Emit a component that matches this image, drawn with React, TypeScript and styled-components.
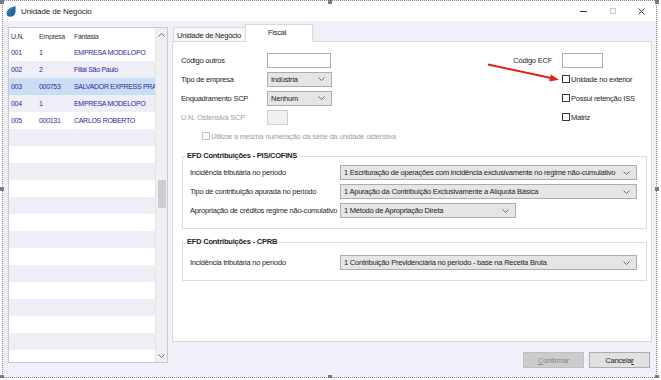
import styled, { createGlobalStyle } from 'styled-components'

const GlobalStyle = createGlobalStyle`
  html, body {
    margin: 0;
    padding: 0;
    background: #ffffff;
  }
  body {
    font-family: "Liberation Sans", Arial, sans-serif;
    font-size: 7.5px;
    letter-spacing: -0.22px;
    color: #1e1e1e;
  }
`

const Frame = styled.div`
  position: relative;
  box-sizing: border-box;
  width: 655px;
  height: 378px;
  margin-left: 2px;
  border: 1px dotted #8c8c8c;
  display: flex;
  flex-direction: column;
  background: #f0f0f8;
`

const Handle = styled.span<{ $x: string; $y: string }>`
  position: absolute;
  width: 4px;
  height: 4px;
  background: #7a7a7a;
  left: ${(p) => p.$x};
  top: ${(p) => p.$y};
`

const TitleBar = styled.div`
  height: 20px;
  flex: none;
  display: flex;
  align-items: center;
  background: #ffffff;
  padding-left: 3px;
  font-size: 8px;
  letter-spacing: -0.1px;
  color: #222;

  .title {
    margin-left: 5px;
  }
`

const WindowButtons = styled.div`
  margin-left: auto;
  display: flex;
  height: 100%;
`

const WinButton = styled.span`
  width: 29px;
  height: 100%;
  display: flex;
  align-items: center;
  justify-content: center;
`

const Main = styled.div`
  display: flex;
  gap: 4px;
  padding: 3px 0 0 5px;
`

const Grid = styled.div`
  box-sizing: border-box;
  width: 160px;
  height: 336px;
  margin-top: 3px;
  border: 1px solid #c9c9cf;
  background: #ffffff;
  display: flex;
  overflow: hidden;
`

const GridBody = styled.div`
  flex: 1;
  overflow: hidden;
  font-size: 7px;
  letter-spacing: -0.3px;
`

const HeaderRow = styled.div`
  display: flex;
  height: 16px;
  align-items: center;
  color: #333;
`

const Row = styled.div<{ $striped?: boolean; $selected?: boolean }>`
  display: flex;
  height: 17px;
  align-items: center;
  color: #2a2a9c;
  background: ${(p) => (p.$selected ? '#c9def5' : p.$striped ? '#eeeef7' : '#ffffff')};
`

const Cell = styled.span<{ $w?: number }>`
  padding-left: 2px;
  white-space: nowrap;
  overflow: hidden;
  box-sizing: border-box;
  ${(p) => (p.$w ? `width: ${p.$w}px; flex: none;` : 'flex: 1;')}
`

const ScrollBar = styled.div`
  width: 12px;
  flex: none;
  background: #f0f0f0;
  border-left: 1px solid #e4e4e4;
  display: flex;
  flex-direction: column;
  align-items: center;
  justify-content: space-between;
  padding: 5px 0 4px;
  box-sizing: border-box;
  position: relative;
`

const Thumb = styled.div`
  position: absolute;
  left: 2px;
  top: 152px;
  width: 8px;
  height: 28px;
  background: #cdcdcd;
`

const RightColumn = styled.div`
  width: 480px;
  display: flex;
  flex-direction: column;
`

const TabStrip = styled.div`
  display: flex;
  align-items: flex-end;
  height: 17px;
  padding-left: 1px;
`

const Tab = styled.div<{ $active?: boolean }>`
  box-sizing: border-box;
  border: 1px solid #d9d9d9;
  border-bottom: none;
  color: #222;
  ${(p) =>
    p.$active
      ? `
    width: 68px;
    height: 18px;
    margin-bottom: -1px;
    background: #ffffff;
    padding: 3px 0 0 22px;
    position: relative;
    z-index: 1;
  `
      : `
    width: 72px;
    height: 14px;
    background: #f7f7fb;
    padding: 3px 0 0 3px;
    border-right: none;
  `}
`

const Panel = styled.div`
  position: relative;
  box-sizing: border-box;
  height: 301px;
  border: 1px solid #d9d9d9;
  background: #ffffff;
  padding: 10px 0 0 8px;
  display: flex;
  flex-direction: column;
`

const TopSection = styled.div`
  display: flex;
  justify-content: space-between;
`

const FormGrid = styled.div`
  display: grid;
  grid-template-columns: 86px auto;
  grid-auto-rows: 16px;
  row-gap: 3px;
  align-items: center;
`

const SideGrid = styled.div`
  display: grid;
  grid-template-columns: 50px 88px;
  grid-auto-rows: 16px;
  column-gap: 10px;
  row-gap: 3px;
  align-items: center;
  margin-right: 1px;

  .ecf {
    justify-self: end;
  }
  .check {
    grid-column: 2;
  }
`

const Label = styled.span<{ $disabled?: boolean }>`
  color: ${(p) => (p.$disabled ? '#a0a0a0' : '#1e1e1e')};
  white-space: nowrap;
`

const TextBox = styled.div<{ $w: number; $disabled?: boolean }>`
  box-sizing: border-box;
  width: ${(p) => p.$w}px;
  height: 15px;
  border: 1px solid ${(p) => (p.$disabled ? '#cfcfcf' : '#abadb3')};
  background: ${(p) => (p.$disabled ? '#f0f0f0' : '#ffffff')};
`

const SelectBox = styled.div<{ $w: number }>`
  box-sizing: border-box;
  width: ${(p) => p.$w}px;
  height: 15px;
  border: 1px solid #adadad;
  background: #e5e5e5;
  display: flex;
  align-items: center;
  justify-content: space-between;
  padding: 0 6px 0 3px;
  color: #1e1e1e;
  white-space: nowrap;
  overflow: hidden;
`

const CheckLine = styled.label<{ $disabled?: boolean; $indent?: number }>`
  display: flex;
  align-items: center;
  margin-left: ${(p) => p.$indent ?? 0}px;
  color: ${(p) => (p.$disabled ? '#a0a0a0' : '#1e1e1e')};
  white-space: nowrap;
`

const Box = styled.span<{ $disabled?: boolean }>`
  box-sizing: border-box;
  width: 8px;
  height: 8px;
  margin-right: 1px;
  border: 1px solid ${(p) => (p.$disabled ? '#c4c4c4' : '#333333')};
  background: #ffffff;
`

const OstensivaRow = styled.div`
  margin-top: 6px;
  height: 10px;
  display: flex;
  align-items: center;
`

const Group = styled.fieldset<{ $gap: number }>`
  margin: ${(p) => p.$gap}px 4px 0 1px;
  padding: 0 7px 10px 7px;
  border: 1px solid #dcdcdc;
  min-width: 0;
`

const Legend = styled.legend`
  font-weight: bold;
  line-height: 10px;
  padding: 0 2px;
  margin-left: -5px;
  color: #222;
`

const GroupRows = styled.div<{ $top: number }>`
  display: grid;
  grid-template-columns: 150px auto;
  grid-auto-rows: 15px;
  row-gap: 4px;
  align-items: center;
  padding-top: ${(p) => p.$top}px;
`

const Arrow = styled.svg`
  position: absolute;
  left: 310px;
  top: 17px;
`

const Footer = styled.div`
  display: flex;
  justify-content: flex-end;
  gap: 5px;
  margin-top: 10px;
  padding-right: 2px;
`

const Button = styled.div<{ $disabled?: boolean }>`
  box-sizing: border-box;
  width: 61px;
  height: 16px;
  display: flex;
  align-items: center;
  justify-content: center;
  border: 1px solid ${(p) => (p.$disabled ? '#bfbfbf' : '#adadad')};
  background: ${(p) => (p.$disabled ? '#cccccc' : '#e1e1e1')};
  color: ${(p) => (p.$disabled ? '#858585' : '#1a1a1a')};
`

function Chevron({ up }: { up?: boolean }) {
  return (
    <svg width="7" height="4" viewBox="0 0 7 4">
      <polyline
        points={up ? '0.5,3.5 3.5,0.5 6.5,3.5' : '0.5,0.5 3.5,3.5 6.5,0.5'}
        fill="none"
        stroke="#6a6a6a"
        strokeWidth="1"
      />
    </svg>
  )
}

function Select({ w, value }: { w: number; value: string }) {
  return (
    <SelectBox $w={w}>
      <span>{value}</span>
      <Chevron />
    </SelectBox>
  )
}

function Check({ label }: { label: string }) {
  return (
    <CheckLine className="check">
      <Box />
      {label}
    </CheckLine>
  )
}

const units = [
  ['001', '1', 'EMPRESA MODELOPO'],
  ['002', '2', 'Filial São Paulo'],
  ['003', '000753', 'SALVADOR EXPRESS PRA'],
  ['004', '1', 'EMPRESA MODELOPO'],
  ['005', '000131', 'CARLOS ROBERTO'],
]

const rows = Array.from({ length: 20 }, (_, i) => units[i] ?? ['', '', ''])

export default function App() {
  return (
    <>
      <GlobalStyle />
      <Frame>
        <Handle $x="-3px" $y="-1px" />
        <Handle $x="calc(50% - 2px)" $y="-1px" />
        <Handle $x="calc(100% - 1px)" $y="-1px" />
        <Handle $x="-3px" $y="calc(50% - 2px)" />
        <Handle $x="calc(100% - 1px)" $y="calc(50% - 2px)" />
        <Handle $x="-3px" $y="calc(100% - 2px)" />
        <Handle $x="calc(50% - 2px)" $y="calc(100% - 2px)" />
        <Handle $x="calc(100% - 1px)" $y="calc(100% - 2px)" />

        <TitleBar>
          <svg width="10" height="11" viewBox="0 0 10 11">
            <defs>
              <linearGradient id="drop" x1="0" y1="0" x2="1" y2="1">
                <stop offset="0" stopColor="#3f8ed0" />
                <stop offset="1" stopColor="#174f8c" />
              </linearGradient>
            </defs>
            <path d="M9.5 0 C5 0.8 0.5 3.5 0.5 7.5 C0.5 9.6 2.2 10.8 4.3 10.8 C7.6 10.8 9.6 8 9.6 4.8 C9.6 3 9.6 1.4 9.5 0 Z" fill="url(#drop)" />
          </svg>
          <span className="title">Unidade de Negócio</span>
          <WindowButtons>
            <WinButton>
              <svg width="7" height="1">
                <rect width="7" height="1" fill="#333" />
              </svg>
            </WinButton>
            <WinButton>
              <svg width="6" height="6">
                <rect x="0.5" y="0.5" width="5" height="5" fill="none" stroke="#c8c8c8" />
              </svg>
            </WinButton>
            <WinButton>
              <svg width="7" height="7">
                <path d="M0.5 0.5 L6.5 6.5 M6.5 0.5 L0.5 6.5" stroke="#333" strokeWidth="0.9" />
              </svg>
            </WinButton>
          </WindowButtons>
        </TitleBar>

        <Main>
          <Grid>
            <GridBody>
              <HeaderRow>
                <Cell $w={28}>U.N.</Cell>
                <Cell $w={35}>Empresa</Cell>
                <Cell>Fantasia</Cell>
              </HeaderRow>
              {rows.map((r, i) => (
                <Row key={i} $striped={i % 2 === 1} $selected={i === 2}>
                  <Cell $w={28}>{r[0]}</Cell>
                  <Cell $w={35}>{r[1]}</Cell>
                  <Cell>{r[2]}</Cell>
                </Row>
              ))}
            </GridBody>
            <ScrollBar>
              <Chevron up />
              <Thumb />
              <Chevron />
            </ScrollBar>
          </Grid>

          <RightColumn>
            <TabStrip>
              <Tab>Unidade de Negócio</Tab>
              <Tab $active>Fiscal</Tab>
            </TabStrip>
            <Panel>
              <TopSection>
                <div>
                  <FormGrid>
                    <Label>Código outros</Label>
                    <TextBox $w={64} />
                    <Label>Tipo de empresa</Label>
                    <Select w={65} value="Indústria" />
                    <Label>Enquadramento SCP</Label>
                    <Select w={65} value="Nenhum" />
                    <Label $disabled>U.N. Ostensiva SCP</Label>
                    <TextBox $w={21} $disabled />
                  </FormGrid>
                  <OstensivaRow>
                    <CheckLine $disabled $indent={21}>
                      <Box $disabled />
                      Utilizar a mesma numeração da série da unidade ostensiva
                    </CheckLine>
                  </OstensivaRow>
                </div>
                <SideGrid>
                  <Label className="ecf">Código ECF</Label>
                  <TextBox $w={41} />
                  <Check label="Unidade no exterior" />
                  <Check label="Possui retenção ISS" />
                  <Check label="Matriz" />
                </SideGrid>
              </TopSection>

              <Arrow width="80" height="26" viewBox="0 0 80 26">
                <line x1="5" y1="5.5" x2="68" y2="19" stroke="#e3201b" strokeWidth="2" />
                <polygon points="76,20.8 66.2,22.6 67.8,15.4" fill="#e3201b" />
              </Arrow>

              <Group $gap={10}>
                <Legend>EFD Contribuições - PIS/COFINS</Legend>
                <GroupRows $top={4}>
                  <Label>Incidência tributária no período</Label>
                  <Select w={297} value="1 Escrituração de operações com incidência exclusivamente no regime não-cumulativo" />
                  <Label>Tipo de contribuição apurada no período</Label>
                  <Select w={297} value="1 Apuração da Contribuição Exclusivamente a Alíquota Básica" />
                  <Label>Apropriação de créditos regime não-cumulativo</Label>
                  <Select w={176} value="1 Método de Apropriação Direta" />
                </GroupRows>
              </Group>

              <Group $gap={8}>
                <Legend>EFD Contribuições - CPRB</Legend>
                <GroupRows $top={8}>
                  <Label>Incidência tributária no período</Label>
                  <Select w={297} value="1 Contribuição Previdenciária no período - base na Receita Bruta" />
                </GroupRows>
              </Group>
            </Panel>
            <Footer>
              <Button $disabled>
                <span>
                  <u>C</u>onfirmar
                </span>
              </Button>
              <Button>
                <span>
                  Cancela<u>r</u>
                </span>
              </Button>
            </Footer>
          </RightColumn>
        </Main>
      </Frame>
    </>
  )
}
